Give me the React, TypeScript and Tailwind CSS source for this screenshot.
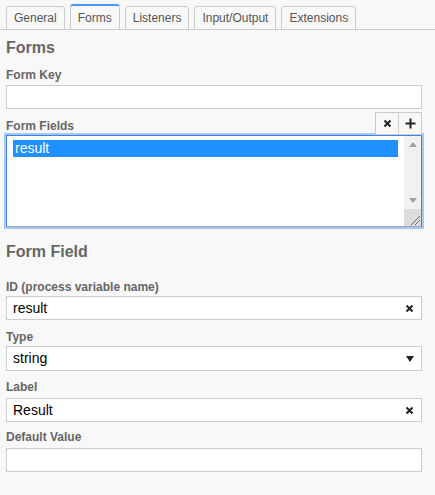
import React from 'react';

const font = { fontFamily: '"Liberation Sans", Arial, sans-serif' };

const tabs = ['General', 'Forms', 'Listeners', 'Input/Output', 'Extensions'];

const Label = ({ children, className = '' }: { children: React.ReactNode; className?: string }) => (
  <div className={`text-[12px] leading-[15px] font-bold text-[#666] ${className}`}>{children}</div>
);

const ClearIcon = () => (
  <svg width="9" height="9" viewBox="0 0 9 9" className="shrink-0">
    <path d="M1.5 1.5 L7.5 7.5 M7.5 1.5 L1.5 7.5" stroke="#222" strokeWidth="2" />
  </svg>
);

const TextField = ({ value, clear }: { value?: string; clear?: boolean }) => (
  <div className="flex h-[24px] items-center border border-[#ccc] bg-white pl-[6px] pr-[7px]">
    <span className="flex-1 text-[14px] text-black">{value}</span>
    {clear ? <ClearIcon /> : null}
  </div>
);

export default function App() {
  return (
    <div className="h-[495px] w-[435px] overflow-hidden bg-[#f8f8f8]" style={font}>
      {/* tabs */}
      <div className="flex h-[30px] items-end gap-[5px] border-b border-[#ccc] px-[6px]">
        {tabs.map((t) =>
          t === 'Forms' ? (
            <div
              key={t}
              className="-mb-px flex h-[26px] items-center rounded-t-[3px] border border-t-[2px] border-[#ccc] border-t-[#4d90fe] bg-[#f8f8f8] px-[7px] text-[12px] text-[#555]"
            >
              {t}
            </div>
          ) : (
            <div
              key={t}
              className="-mb-px flex h-[24px] items-center rounded-t-[3px] border border-[#ccc] bg-[#f8f8f8] px-[7px] text-[12px] text-[#555]"
            >
              {t}
            </div>
          ),
        )}
      </div>

      <div className="pl-[6px] pr-[13px]">
        <div className="mt-[8px] text-[16px] leading-[20px] font-bold text-[#666]">Forms</div>

        <Label className="mt-[10px] mb-[2px]">Form Key</Label>
        <TextField />

        <div className="mt-[3px] flex h-[23px] items-end justify-between">
          <Label className="mb-[1px]">Form Fields</Label>
          <div className="flex">
            <div className="flex h-[23px] w-[24px] items-center justify-center border border-[#ccc] bg-[#f8f8f8]">
              <ClearIcon />
            </div>
            <div className="-ml-px flex h-[23px] w-[24px] items-center justify-center border border-[#ccc] bg-[#f8f8f8]">
              <svg width="11" height="11" viewBox="0 0 11 11">
                <path d="M5.5 0.5 V10.5 M0.5 5.5 H10.5" stroke="#222" strokeWidth="2" />
              </svg>
            </div>
          </div>
        </div>

        {/* listbox */}
        <div className="-mx-[2px] -mt-[2px] border-[2px] border-[#a7c7f7]">
          <div className="flex h-[92px] border border-[#3c80ee] border-b-[#9aa6b8] bg-white">
            <div className="flex-1 pt-[4px] pl-[6px] pr-[6px]">
              <div className="h-[17px] bg-[#1e90ff] pl-[2px] text-[14px] leading-[17px] text-white">result</div>
            </div>
            <div className="flex w-[17px] flex-col bg-[#f1f1f1]">
              <div className="flex h-[17px] items-center justify-center">
                <svg width="8" height="5" viewBox="0 0 8 5">
                  <path d="M0 5 L4 0 L8 5 Z" fill="#a3a3a3" />
                </svg>
              </div>
              <div className="flex-1" />
              <div className="flex h-[17px] items-center justify-center">
                <svg width="8" height="5" viewBox="0 0 8 5">
                  <path d="M0 0 L8 0 L4 5 Z" fill="#a3a3a3" />
                </svg>
              </div>
              <div className="relative h-[17px] bg-[#dcdcdc]">
                <svg width="17" height="17" viewBox="0 0 17 17" className="absolute inset-0">
                  <path d="M16 7 L7 16 M16 11 L11 16" stroke="#666" strokeWidth="1" />
                </svg>
              </div>
            </div>
          </div>
        </div>

        <div className="mt-[13px] text-[16px] leading-[20px] font-bold text-[#666]">Form Field</div>

        <Label className="mt-[18px] mb-[1px]">ID (process variable name)</Label>
        <TextField value="result" clear />

        <Label className="mt-[10px] mb-px">Type</Label>
        <div className="flex h-[25px] items-center border border-[#ccc] bg-white pl-[6px] pr-[7px]">
          <span className="flex-1 text-[14px] text-black">string</span>
          <svg width="8" height="6" viewBox="0 0 8 6">
            <path d="M0 0 L8 0 L4 6 Z" fill="#222" />
          </svg>
        </div>

        <Label className="mt-[9px] mb-[3px]">Label</Label>
        <TextField value="Result" clear />

        <Label className="mt-[8px] mb-[3px]">Default Value</Label>
        <TextField />
      </div>
    </div>
  );
}
